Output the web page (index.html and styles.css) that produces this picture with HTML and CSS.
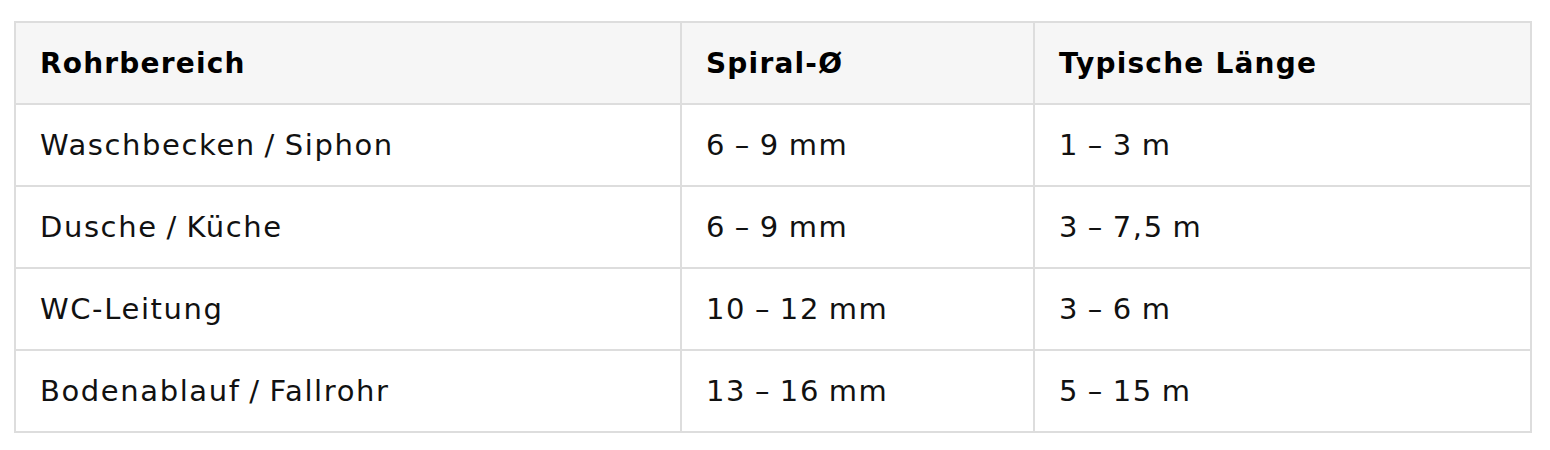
FILE: index.html
```html
<!DOCTYPE html>
<html lang="de">
<head>
<meta charset="utf-8">
<title>Spiralen</title>
<link rel="stylesheet" href="styles.css">
</head>
<body>
<div class="wrap">
<table class="spec">
  <colgroup>
    <col class="c1"><col class="c2"><col class="c3">
  </colgroup>
  <thead>
    <tr><th>Rohrbereich</th><th>Spiral-Ø</th><th>Typische Länge</th></tr>
  </thead>
  <tbody>
    <tr><td>Waschbecken / Siphon</td><td>6 – 9 mm</td><td>1 – 3 m</td></tr>
    <tr><td>Dusche / Küche</td><td>6 – 9 mm</td><td>3 – 7,5 m</td></tr>
    <tr><td>WC-Leitung</td><td>10 – 12 mm</td><td>3 – 6 m</td></tr>
    <tr><td>Bodenablauf / Fallrohr</td><td>13 – 16 mm</td><td>5 – 15 m</td></tr>
  </tbody>
</table>
</div>
</body>
</html>
```
FILE: styles.css
```css
html, body { margin: 0; padding: 0; background: #fff; }
.wrap { padding: 21px 0 0 14px; }
.spec {
  border-collapse: collapse;
  table-layout: fixed;
  width: 1516px;
  font-family: "DejaVu Sans", "Open Sans", sans-serif;
  font-size: 29px;
  color: #111;
}
.c1 { width: 666px; }
.c2 { width: 353px; }
.c3 { width: 497px; }
.spec th, .spec td {
  border: 2px solid #dddddd;
  text-align: left;
  padding: 0 24px;
  height: 82px;
  box-sizing: border-box;
  vertical-align: middle;
}
.spec th {
  background: #f6f6f6;
  font-weight: 700;
  font-size: 28px;
  color: #000;
  letter-spacing: 1.2px;
}
.spec td {
  font-weight: 400;
  letter-spacing: 1.6px;
  word-spacing: -2px;
}
```
